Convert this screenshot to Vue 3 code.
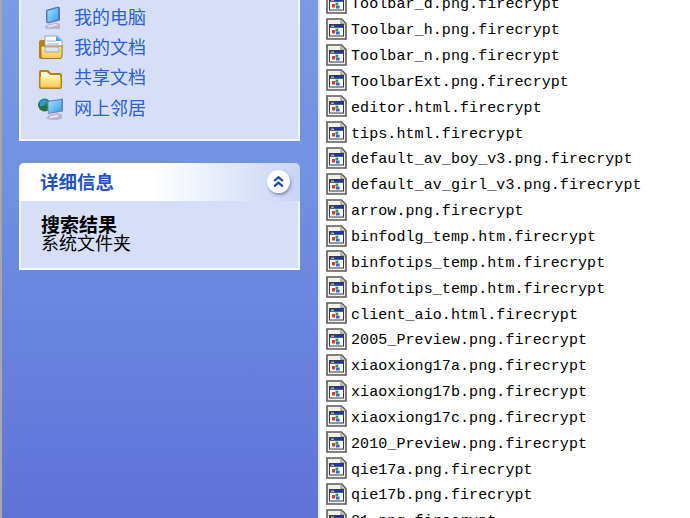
<script setup>
const places = [
  { name: '桌面', icon: 'pc' },
  { name: '我的电脑', icon: 'pc' },
  { name: '我的文档', icon: 'docs' },
  { name: '共享文档', icon: 'folder' },
  { name: '网上邻居', icon: 'net' }
]
const files = [
  'Toolbar_d.png.firecrypt', 'Toolbar_h.png.firecrypt', 'Toolbar_n.png.firecrypt',
  'ToolbarExt.png.firecrypt', 'editor.html.firecrypt', 'tips.html.firecrypt',
  'default_av_boy_v3.png.firecrypt', 'default_av_girl_v3.png.firecrypt', 'arrow.png.firecrypt',
  'binfodlg_temp.htm.firecrypt', 'binfotips_temp.htm.firecrypt', 'binfotips_temp.htm.firecrypt',
  'client_aio.html.firecrypt', '2005_Preview.png.firecrypt', 'xiaoxiong17a.png.firecrypt',
  'xiaoxiong17b.png.firecrypt', 'xiaoxiong17c.png.firecrypt', '2010_Preview.png.firecrypt',
  'qie17a.png.firecrypt', 'qie17b.png.firecrypt', '21.png.firecrypt'
]
</script>

<template>
  <div class="screen">
    <aside class="sidebar">
      <section class="panel places">
        <div v-for="p in places" :key="p.name" class="place">
          <svg class="place-icon" viewBox="0 0 26 26" aria-hidden="true">
            <defs>
              <linearGradient id="scr" x1="0" y1="0" x2="1" y2="1">
                <stop offset="0" stop-color="#a6e6fc" />
                <stop offset="1" stop-color="#2f9cec" />
              </linearGradient>
              <linearGradient id="fold" x1="0" y1="0" x2="0" y2="1">
                <stop offset="0" stop-color="#fff2a8" />
                <stop offset="1" stop-color="#f6c94e" />
              </linearGradient>
            </defs>
            <g v-if="p.icon === 'pc'">
              <path d="M8 7l12-3.500 2 1v13l-12 3-2-1z" fill="#5f74b8" />
              <path d="M9.500 8l10.500-3v11.500l-10.500 3z" fill="url(#scr)" />
              <path d="M7 23l4-2 8-1.500 3 1.500v5l-4 2-8-1-3-2z" fill="#b9b7d0" />
              <path d="M9 23l9-2 2 1-9 2z" fill="#f1f1f8" />
            </g>
            <g v-else-if="p.icon === 'docs'">
              <path d="M1 9q0-2 2-2h5v19H3q-2 0-2-2z" fill="#b9801a" />
              <path d="M7 3h12l5 4v8H7z" fill="#fff" stroke="#8aa2c8" />
              <path d="M18 3l6 5h-6z" fill="#4ca0ec" />
              <path d="M9 8h9M9 11h12" stroke="#93add6" />
              <path d="M3 13h21v10q0 2.500-2 2.500H5q-2 0-2-2.500z" fill="url(#fold)" stroke="#a8740f" />
              <path d="M7 14h14v5H7z" fill="#dde6f2" stroke="#9aa8c0" />
            </g>
            <g v-else-if="p.icon === 'folder'">
              <path d="M1 9q0-2 2-2h7l3 3h9q2 0 2 2v12q0 2-2 2H3q-2 0-2-2z" fill="#b9801a" />
              <path d="M3 9h6l3 3h10v2H3z" fill="#fff7d0" />
              <path d="M2.500 14h20v9.500q0 1-1 1H3.500q-1 0-1-1z" fill="url(#fold)" />
            </g>
            <g v-else>
              <circle cx="6.500" cy="11" r="6.500" fill="#1f7a3a" />
              <path d="M1.500 8q3-3.500 6.500-2.500l1 3-3 3-4 1z" fill="#3a8fe0" />
              <path d="M9 7l16-2.500v13l-15 2.500z" fill="#6a7fc0" />
              <path d="M10.500 8l13-2v10.500l-13 2.500z" fill="url(#scr)" />
              <path d="M8 24l3-3 8-2 5 1.500v4l-5 2-8-1z" fill="#b9b7d0" />
              <path d="M11 23l8-2 2 1-8 2z" fill="#f1f1f8" />
            </g>
          </svg>
          <span class="place-name">{{ p.name }}</span>
        </div>
      </section>

      <section class="details">
        <header class="details-head">
          <span class="details-title">详细信息</span>
          <span class="collapse">
            <svg viewBox="0 0 12 12" width="13" height="13" aria-hidden="true">
              <path d="M2 5.500L6 2l4 3.500M2 10.500L6 7l4 3.500" fill="none" stroke="#1a44a8" stroke-width="2" />
            </svg>
          </span>
        </header>
        <div class="details-body">
          <div class="details-name">搜索结果</div>
          <div class="details-kind">系统文件夹</div>
        </div>
      </section>
    </aside>

    <main class="files">
      <div v-for="(f, i) in files" :key="i" class="file">
        <svg class="file-icon" viewBox="0 0 21 22" aria-hidden="true">
          <path d="M1 1h14.500l4.500 4.500V21H1z" fill="#f3f1e6" stroke="#5a5a5e" stroke-width="1.600" />
          <path d="M15 1.500v4.500h4.500" fill="#cfcfc8" stroke="#88888c" />
          <rect x="3.500" y="6.500" width="14" height="11.500" fill="#fff" stroke="#3a3a40" stroke-width="1" />
          <rect x="4" y="7" width="13" height="2.800" fill="#1a3aa6" />
          <rect x="5" y="7.600" width="3" height="1.200" fill="#f2d23c" />
          <rect x="6" y="12" width="3.200" height="3.500" fill="#e2382a" />
          <rect x="9.500" y="10.500" width="2.800" height="2.800" fill="#2f9f44" />
          <rect x="10" y="13.500" width="3.600" height="3" fill="#2a6adf" />
        </svg>
        <span class="file-name">{{ f }}</span>
      </div>
    </main>
  </div>
</template>

<style>
html, body { margin: 0; padding: 0; overflow: hidden; background: #fff; }
</style>

<style scoped>
.screen {
  display: flex;
  width: 690px;
  height: 518px;
  overflow: hidden;
  font-family: "Noto Sans CJK SC", "Liberation Sans", sans-serif;
}
.sidebar {
  flex: 0 0 318px;
  box-sizing: border-box;
  height: 518px;
  border-left: 2px solid #a8a8a8;
  padding: 0 18px 0 17px;
  background: linear-gradient(180deg, #7b9be6 0%, #6f8fe0 40%, #6172d7 100%);
}
.panel {
  border: 2px solid #f4f6fd;
  border-top: 0;
  background: #d6dff7;
}
.places {
  box-sizing: border-box;
  height: 171px;
  margin-top: -30px;
  padding: 0 0 0 17px;
}
.place {
  display: flex;
  align-items: center;
  height: 30.400px;
}
.place-icon {
  width: 26px;
  height: 26px;
  flex: none;
}
.place-name {
  margin-left: 10px;
  font-size: 18px;
  line-height: 24px;
  color: #2a5fd6;
}
.details {
  margin-top: 22px;
  height: 107px;
  display: flex;
  flex-direction: column;
}
.details-head {
  display: flex;
  align-items: center;
  justify-content: space-between;
  box-sizing: border-box;
  height: 38px;
  padding: 0 10px 0 21px;
  border-radius: 5px 5px 0 0;
  background: linear-gradient(90deg, #fff 0%, #fff 48%, #c8d4f5 100%);
}
.details-title {
  font-size: 18.500px;
  line-height: 24px;
  margin-top: -2px;
  font-weight: 700;
  color: #1f55c8;
}
.collapse {
  display: flex;
  align-items: center;
  justify-content: center;
  width: 23px;
  height: 23px;
  margin-top: -2px;
  border-radius: 50%;
  background: #fff;
  box-shadow: 1px 2px 3px rgba(70, 80, 140, .55);
}
.details-body {
  flex: 1;
  box-sizing: border-box;
  padding: 13px 0 0 21px;
  background: #d6dff7;
  border: 2px solid #f4f6fd;
  border-top: 0;
  color: #000;
  font-size: 18px;
}
.details-name {
  font-size: 19px;
  line-height: 19px;
  font-weight: 700;
  margin-left: -1px;
}
.details-kind {
  line-height: 18px;
  margin-left: -1px;
}
.files {
  flex: 1;
  min-width: 0;
  height: 518px;
  overflow: hidden;
  background: #fff;
  border-left: 2px solid #e6e9f4;
  padding-left: 6px;
}
.file {
  display: flex;
  align-items: center;
  height: 25.850px;
  position: relative;
  top: -8px;
}
.file-icon {
  width: 21px;
  height: 22px;
  flex: none;
  margin-bottom: 4px;
}
.file-name {
  margin-left: 4px;
  font-family: "Liberation Mono", monospace;
  font-size: 15px;
  letter-spacing: .08px;
  color: #000;
  white-space: pre;
}
</style>
